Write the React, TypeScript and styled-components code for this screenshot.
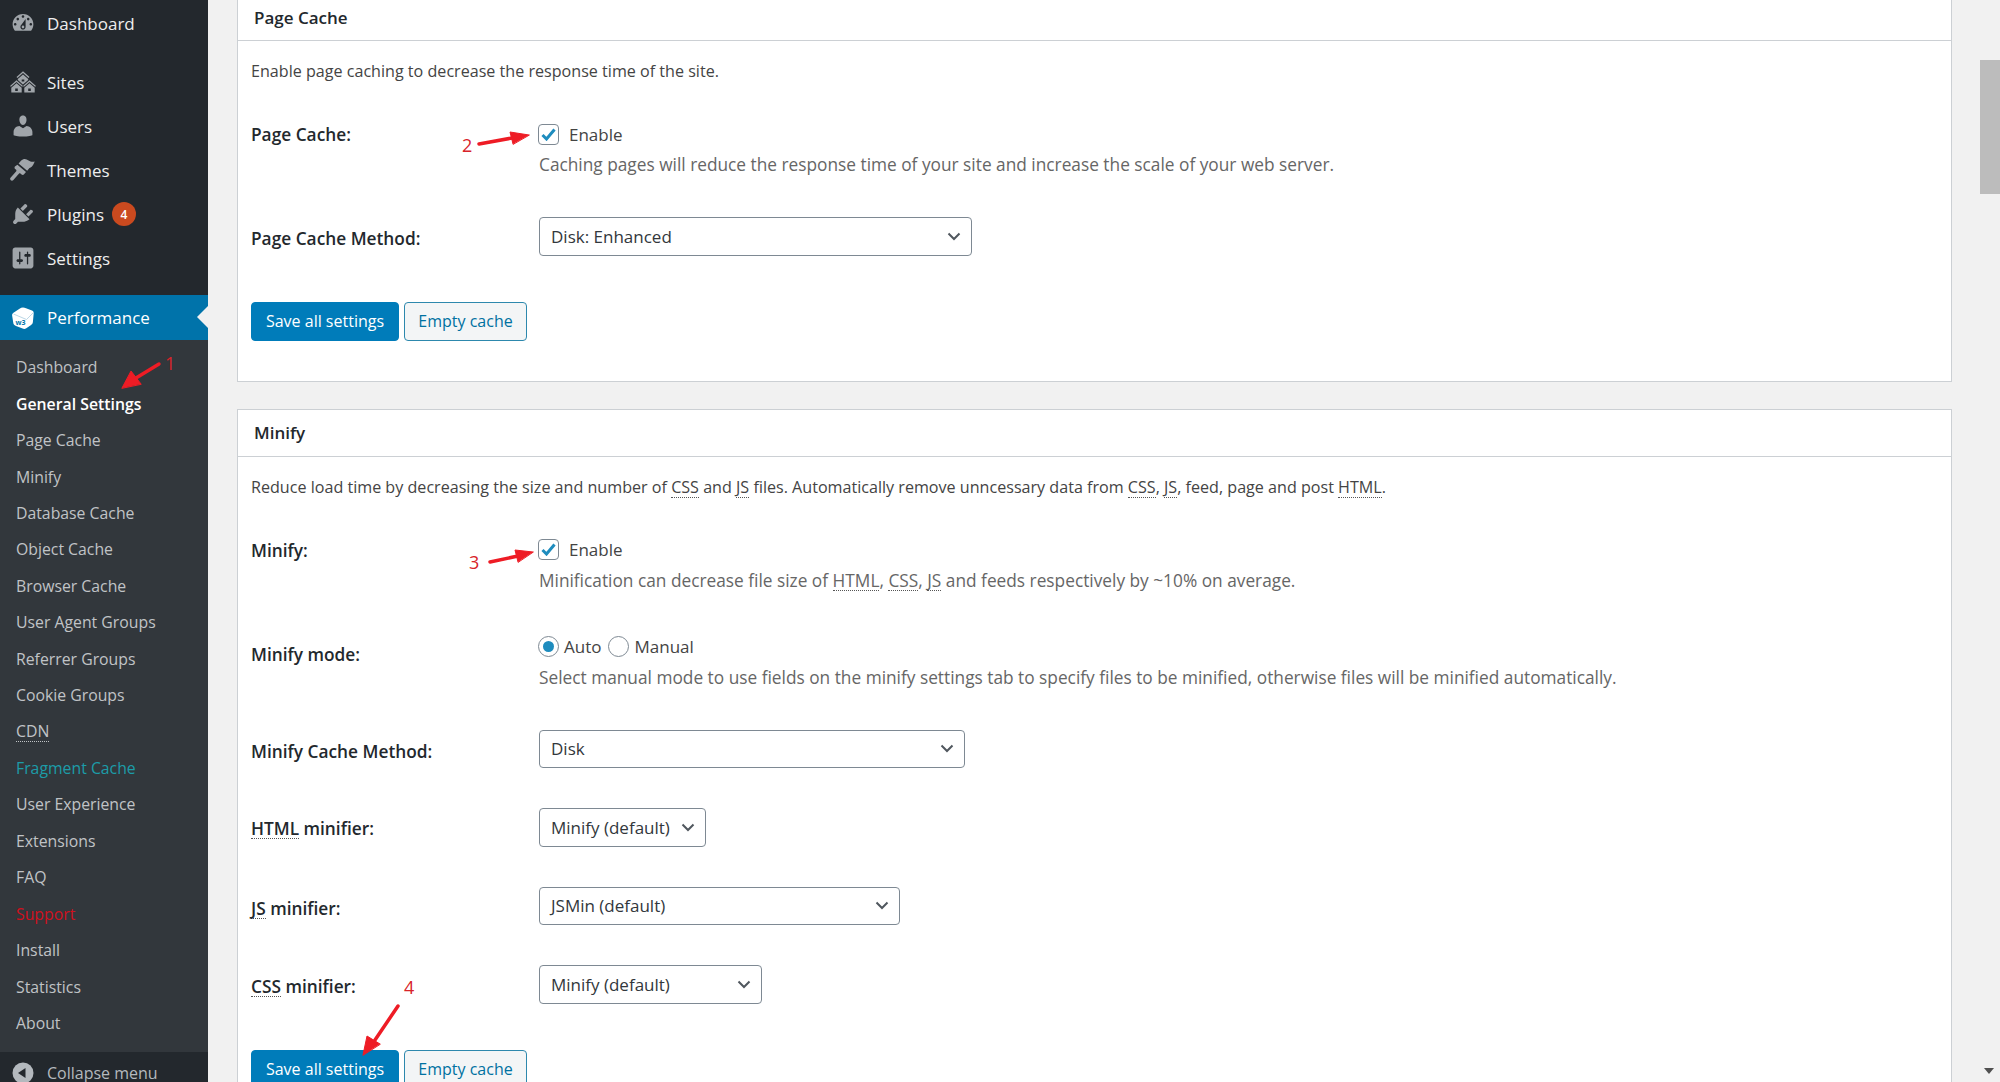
import styled, { createGlobalStyle } from 'styled-components';

const GlobalStyle = createGlobalStyle`
    html, body {
        margin: 0;
        padding: 0;
        height: 1082px;
        overflow: hidden;
        background: #f1f1f1;
        font-family: 'Open Sans', 'Noto Sans', sans-serif;
    }
`;

const icons = {
    dashboard:
        'M3.76 16h12.48c1.1-1.37 1.76-3.11 1.76-5 0-4.42-3.58-8-8-8s-8 3.58-8 8c0 1.89.66 3.63 1.76 5zM10 4c.55 0 1 .45 1 1s-.45 1-1 1-1-.45-1-1 .45-1 1-1zM6 6c.55 0 1 .45 1 1s-.45 1-1 1-1-.45-1-1 .45-1 1-1zm8 0c.55 0 1 .45 1 1s-.45 1-1 1-1-.45-1-1 .45-1 1-1zm-5.37 5.55L12 7v6c0 1.1-.9 2-2 2s-2-.9-2-2c0-.57.24-1.08.63-1.45zM4 10c.55 0 1 .45 1 1s-.45 1-1 1-1-.45-1-1 .45-1 1-1zm12 0c.55 0 1 .45 1 1s-.45 1-1 1-1-.45-1-1 .45-1 1-1zm-5 3c0-.55-.45-1-1-1s-1 .45-1 1 .45 1 1 1 1-.45 1-1z',
    sites: 'M14.27 6.87L10 3.14 5.73 6.87 5 6.14l5-4.38 5 4.38zM14 8.42l-4.05 3.43L6 8.38v-.74l4-3.5 4 3.5v.78zM11 9.7V8H9v1.7h2zm-1.73 4.03L5 10 .73 13.73 0 13l5-4.38L10 13zm10 0L15 10l-4.27 3.73L10 13l5-4.38L20 13zM5 11l4 3.5V18H1v-3.5zm10 0l4 3.5V18h-8v-3.5zM6 17v-2H4v2h2zm10 0v-2h-2v2h2z',
    users: 'M10 9.25c-2.27 0-2.73-3.44-2.73-3.44C7 4.02 7.82 2 9.97 2c2.16 0 2.98 2.02 2.71 3.81 0 0-.41 3.44-2.68 3.44zm0 2.57L12.72 10c2.39 0 4.52 2.33 4.52 4.53v2.49s-3.65 1.13-7.24 1.13c-3.65 0-7.24-1.13-7.24-1.13v-2.49c0-2.25 1.94-4.48 4.47-4.48z',
    themes: 'M19 3.5c-2 .6-3.4 0-4.7-.8-1.2-.7-2-1.4-3.4-1.2-.9.1-1.8.7-2.6 1.6L6.6 5l6.6 5.6 1.3-1.6c.5-.7 1.5-.9 2.2-1.5.9-.9 1.7-2.4 2.3-4zM5.7 6l6.6 5.6-1.5 1.7c-.5.6-1.3.6-1.9.1l-.9-.8c-.3-.2-.8-.2-1 .1l-4.4 5c-.5.6-1.4.7-2 .2-.6-.5-.7-1.4-.2-2l4.4-5c.2-.3.2-.8-.1-1l-.7-.6c-.6-.5-.7-1.4-.2-2z',
    plugins:
        'M13.11 4.36L9.87 7.6 8 5.73l3.24-3.24c.35-.34 1.05-.2 1.56.32.52.51.66 1.21.31 1.55zm-8 1.77l.91-1.12 9.01 9.01-1.19.84c-.71.71-2.63 1.16-3.82 1.16H6.14L4.9 17.26c-.59.59-1.54.59-2.12 0-.59-.58-.59-1.53 0-2.12l1.24-1.24v-3.88c0-1.13.4-3.19 1.09-3.89zm7.26 3.97l3.24-3.24c.34-.35 1.04-.21 1.55.31.52.51.66 1.21.31 1.55l-3.24 3.25z',
    settings:
        'M18 16V4c0-1.1-.9-2-2-2H4c-1.1 0-2 .9-2 2v12c0 1.1.9 2 2 2h12c1.1 0 2-.9 2-2zM8 11h1c.55 0 1 .45 1 1s-.45 1-1 1H8v1.5c0 .28-.22.5-.5.5s-.5-.22-.5-.5V13H6c-.55 0-1-.45-1-1s.45-1 1-1h1V5.5c0-.28.22-.5.5-.5s.5.22.5.5V11zm5-2h-1c-.55 0-1-.45-1-1s.45-1 1-1h1V5.5c0-.28.22-.5.5-.5s.5.22.5.5V7h1c.55 0 1 .45 1 1s-.45 1-1 1h-1v5.5c0 .28-.22.5-.5.5s-.5-.22-.5-.5V9z',
};

const MenuIcon = ({ d }: { d: string }) => (
    <IconSvg viewBox="0 0 20 20">
        <path d={d} fillRule="evenodd" />
    </IconSvg>
);

const CubeIcon = () => (
    <IconSvg viewBox="0 0 26 26">
        <path
            d="M13 2.5c1 0 2 .3 3 .7l6 2.4c1.2.5 1.8 1.5 1.7 2.8l-.8 8.6c-.1 1.2-.7 2.2-1.8 3l-4.8 3.2c-1.2.8-2.4.9-3.7.4l-6.6-2.7c-1.2-.5-2.3-1.2-2.6-2.5L2.2 11c-.2-1.2 0-2.2.9-3l6.4-4.3c1.1-.8 2.3-1.2 3.5-1.2z"
            fill="#fff"
        />
        <path d="M3.5 9l13 5.5L23 8" fill="none" stroke="#bcd7e6" strokeWidth="1" />
        <text x="5.5" y="19.5" fontSize="7" fontWeight="700" fill="#0073aa" fontFamily="Open Sans, sans-serif">
            w3
        </text>
    </IconSvg>
);

const CollapseIcon = () => (
    <IconSvg viewBox="0 0 26 26">
        <circle cx="13" cy="13" r="10.5" fill="#b4b9be" />
        <path d="M15.5 8v10L8 13z" fill="#23282d" />
    </IconSvg>
);

const Chevron = () => (
    <ChevronSvg viewBox="0 0 14 9">
        <path d="M1.5 1.5L7 7l5.5-5.5" fill="none" stroke="#50575e" strokeWidth="2" />
    </ChevronSvg>
);

const Check = () => (
    <svg width="15" height="13" viewBox="0 0 15 13">
        <path d="M1.5 7l4 4L13.5 1.5" fill="none" stroke="#1e8cbe" strokeWidth="3" />
    </svg>
);

type Tone = 'active' | 'teal' | 'red';

const subItems: { label: string; tone?: Tone; abbr?: boolean }[] = [
    { label: 'Dashboard' },
    { label: 'General Settings', tone: 'active' },
    { label: 'Page Cache' },
    { label: 'Minify' },
    { label: 'Database Cache' },
    { label: 'Object Cache' },
    { label: 'Browser Cache' },
    { label: 'User Agent Groups' },
    { label: 'Referrer Groups' },
    { label: 'Cookie Groups' },
    { label: 'CDN', abbr: true },
    { label: 'Fragment Cache', tone: 'teal' },
    { label: 'User Experience' },
    { label: 'Extensions' },
    { label: 'FAQ' },
    { label: 'Support', tone: 'red' },
    { label: 'Install' },
    { label: 'Statistics' },
    { label: 'About' },
];

const Sidebar = () => (
    <Side>
        <MenuGroup>
            <MenuItem>
                <MenuIcon d={icons.dashboard} />
                Dashboard
            </MenuItem>
        </MenuGroup>
        <MenuGroup>
            <MenuItem>
                <MenuIcon d={icons.sites} />
                Sites
            </MenuItem>
            <MenuItem>
                <MenuIcon d={icons.users} />
                Users
            </MenuItem>
            <MenuItem>
                <MenuIcon d={icons.themes} />
                Themes
            </MenuItem>
            <MenuItem>
                <MenuIcon d={icons.plugins} />
                Plugins
                <Count>4</Count>
            </MenuItem>
            <MenuItem>
                <MenuIcon d={icons.settings} />
                Settings
            </MenuItem>
        </MenuGroup>
        <CurrentItem>
            <CubeIcon />
            Performance
        </CurrentItem>
        <SubMenu>
            {subItems.map(({ label, tone, abbr }, index) => (
                <SubItem key={index} $tone={tone}>
                    {abbr ? <MenuAbbr>{label}</MenuAbbr> : label}
                </SubItem>
            ))}
        </SubMenu>
        <CollapseItem>
            <CollapseIcon />
            Collapse menu
        </CollapseItem>
    </Side>
);

const SelectBox = ({ width, value }: { width: number; value: string }) => (
    <Select $width={width}>
        {value}
        <Chevron />
    </Select>
);

const Actions = ({ gap }: { gap: number }) => (
    <ButtonRow $gap={gap}>
        <PrimaryButton>Save all settings</PrimaryButton>
        <SecondaryButton>Empty cache</SecondaryButton>
    </ButtonRow>
);

const Annotations = () => (
    <>
        <ArrowLayer viewBox="0 0 2000 1082">
            <g fill="#ee1c25" stroke="#ee1c25" strokeLinecap="round">
                <path d="M159 364L136 378" strokeWidth="3.5" fill="none" />
                <path d="M122 388L131 371L141 384z" />
                <path d="M479 144L512 138" strokeWidth="3.5" fill="none" />
                <path d="M529 135L510 132L513 144z" />
                <path d="M490 562L518 556" strokeWidth="3.5" fill="none" />
                <path d="M533 552L515 550L518 562z" />
                <path d="M398 1006L375 1040" strokeWidth="3.5" fill="none" />
                <path d="M363 1055L367 1036L380 1044z" />
            </g>
        </ArrowLayer>
        <Mark $x={165} $y={350}>1</Mark>
        <Mark $x={462} $y={132}>2</Mark>
        <Mark $x={469} $y={549}>3</Mark>
        <Mark $x={404} $y={974}>4</Mark>
    </>
);

export default function App() {
    return (
        <Shell>
            <GlobalStyle />
            <Sidebar />
            <Main>
                <Card $gap={27}>
                    <CardHeader>Page Cache</CardHeader>
                    <CardBody>
                        <Intro>Enable page caching to decrease the response time of the site.</Intro>
                        <Row>
                            <Label>Page Cache:</Label>
                            <Control>
                                <CheckLine>
                                    <CheckBox>
                                        <Check />
                                    </CheckBox>
                                    Enable
                                </CheckLine>
                                <Help>
                                    Caching pages will reduce the response time of your site and increase the scale of
                                    your web server.
                                </Help>
                            </Control>
                        </Row>
                        <Row>
                            <Label $pad={9}>Page Cache Method:</Label>
                            <Control>
                                <SelectBox width={433} value="Disk: Enhanced" />
                            </Control>
                        </Row>
                        <Actions gap={26} />
                    </CardBody>
                </Card>
                <Card>
                    <CardHeader>Minify</CardHeader>
                    <CardBody>
                        <Intro>
                            Reduce load time by decreasing the size and number of <Abbr>CSS</Abbr> and <Abbr>JS</Abbr>{' '}
                            files. Automatically remove unncessary data from <Abbr>CSS</Abbr>, <Abbr>JS</Abbr>, feed,
                            page and post <Abbr>HTML</Abbr>.
                        </Intro>
                        <Row>
                            <Label>Minify:</Label>
                            <Control>
                                <CheckLine>
                                    <CheckBox>
                                        <Check />
                                    </CheckBox>
                                    Enable
                                </CheckLine>
                                <Help>
                                    Minification can decrease file size of <Abbr>HTML</Abbr>, <Abbr>CSS</Abbr>,{' '}
                                    <Abbr>JS</Abbr> and feeds respectively by ~10% on average.
                                </Help>
                            </Control>
                        </Row>
                        <Row>
                            <Label $pad={9}>Minify mode:</Label>
                            <Control>
                                <RadioLine>
                                    <Radio $on />
                                    <RadioText>Auto</RadioText>
                                    <Radio />
                                    <RadioText>Manual</RadioText>
                                </RadioLine>
                                <Help>
                                    Select manual mode to use fields on the minify settings tab to specify files to be
                                    minified, otherwise files will be minified automatically.
                                </Help>
                            </Control>
                        </Row>
                        <Row>
                            <Label $pad={9}>Minify Cache Method:</Label>
                            <Control>
                                <SelectBox width={426} value="Disk" />
                            </Control>
                        </Row>
                        <Row>
                            <Label $pad={8}>
                                <Abbr>HTML</Abbr> minifier:
                            </Label>
                            <Control>
                                <SelectBox width={167} value="Minify (default)" />
                            </Control>
                        </Row>
                        <Row>
                            <Label $pad={9}>
                                <Abbr>JS</Abbr> minifier:
                            </Label>
                            <Control>
                                <SelectBox width={361} value="JSMin (default)" />
                            </Control>
                        </Row>
                        <Row>
                            <Label $pad={9}>
                                <Abbr>CSS</Abbr> minifier:
                            </Label>
                            <Control>
                                <SelectBox width={223} value="Minify (default)" />
                            </Control>
                        </Row>
                        <Actions gap={26} />
                    </CardBody>
                </Card>
            </Main>
            <ScrollTrack>
                <ScrollThumb />
                <ScrollArrow />
            </ScrollTrack>
            <Annotations />
        </Shell>
    );
}

const Shell = styled.div`
    position: relative;
    display: flex;
    width: 2000px;
    height: 1082px;
    overflow: hidden;
    background: #f1f1f1;
    font-size: 17px;
    color: #444;
`;

const Side = styled.nav`
    flex: 0 0 208px;
    display: flex;
    flex-direction: column;
    background: #23282d;
    color: #eee;
    padding-top: 1px;
`;

const MenuGroup = styled.div`
    flex: none;
    margin-bottom: 15px;
`;

const MenuItem = styled.div`
    flex: none;
    display: flex;
    align-items: center;
    height: 44px;
    padding-left: 10px;
    color: #eee;
`;

const CurrentItem = styled(MenuItem)`
    position: relative;
    height: 45px;
    background: #0073aa;
    color: #fff;
    &::after {
        content: '';
        position: absolute;
        right: 0;
        top: 11px;
        border: 11px solid transparent;
        border-left: 0;
        border-right-color: #f1f1f1;
    }
`;

const IconSvg = styled.svg`
    flex: 0 0 26px;
    width: 26px;
    height: 26px;
    margin-right: 11px;
    fill: #a0a5aa;
`;

const Count = styled.span`
    display: inline-flex;
    align-items: center;
    justify-content: center;
    width: 24px;
    height: 24px;
    margin-left: 8px;
    border-radius: 50%;
    background: #ca4a1f;
    color: #fff;
    font-size: 12px;
    font-weight: 600;
`;

const SubMenu = styled.div`
    flex: none;
    background: #32373c;
    padding: 9px 0 11px;
`;

const toneColor = { active: '#fff', teal: '#1c9ca8', red: '#d0101e' };

const SubItem = styled.div<{ $tone?: Tone }>`
    display: flex;
    align-items: center;
    height: 36.44px;
    padding-left: 16px;
    font-size: 15.8px;
    color: ${({ $tone }) => ($tone ? toneColor[$tone] : '#c0c3c6')};
    font-weight: ${({ $tone }) => ($tone === 'active' ? 600 : 400)};
`;

const MenuAbbr = styled.span`
    border-bottom: 1px dotted #c0c3c6;
    line-height: 19px;
`;

const CollapseItem = styled(MenuItem)`
    height: 30px;
    padding-top: 6px;
    font-size: 16px;
    line-height: 18px;
    color: #b4b9be;
`;

const Main = styled.main`
    flex: 1;
    margin-top: -7px;
    padding: 0 48px 0 29px;
    min-width: 0;
`;

const Card = styled.section<{ $gap?: number }>`
    background: #fff;
    border: 1px solid #ccd0d4;
    margin-bottom: ${({ $gap }) => $gap ?? 0}px;
`;

const CardHeader = styled.h2`
    display: flex;
    align-items: center;
    height: 46px;
    margin: 0;
    padding-left: 16px;
    border-bottom: 1px solid #ccd0d4;
    font-size: 17px;
    font-weight: 600;
    color: #23282d;
`;

const CardBody = styled.div`
    padding: 17px 13px 40px;
`;

const Intro = styled.p`
    margin: 0 0 18px;
    line-height: 26px;
    font-size: 16.13px;
    color: #444;
`;

const Row = styled.div`
    display: grid;
    grid-template-columns: 288px 1fr;
    padding: 20px 0;
`;

const Label = styled.div<{ $pad?: number }>`
    padding-top: ${({ $pad }) => $pad ?? 0}px;
    line-height: 26px;
    font-size: 17.3px;
    font-weight: 600;
    color: #23282d;
`;

const Control = styled.div`
    min-width: 0;
`;

const CheckLine = styled.div`
    display: flex;
    align-items: center;
    gap: 10px;
    height: 26px;
    margin: -1px 0 0 -1px;
    color: #444;
`;

const CheckBox = styled.span`
    display: flex;
    align-items: center;
    justify-content: center;
    box-sizing: border-box;
    width: 21px;
    height: 21px;
    border: 1px solid #7e8993;
    border-radius: 4px;
    background: #fff;
`;

const RadioLine = styled.div`
    display: flex;
    align-items: center;
    height: 26px;
    margin: 1px 0 0 -1px;
`;

const Radio = styled.span<{ $on?: boolean }>`
    display: flex;
    align-items: center;
    justify-content: center;
    box-sizing: border-box;
    width: 21px;
    height: 21px;
    border: 1px solid #7e8993;
    border-radius: 50%;
    background: #fff;
    &::before {
        content: '';
        display: ${({ $on }) => ($on ? 'block' : 'none')};
        width: 11px;
        height: 11px;
        border-radius: 50%;
        background: #1e8cbe;
    }
`;

const RadioText = styled.span`
    margin: 0 7px 0 5px;
`;

const Help = styled.div`
    margin-top: 5px;
    line-height: 25px;
    font-size: 17.3px;
    color: #666;
    white-space: nowrap;
`;

const Abbr = styled.span`
    border-bottom: 1px dotted #555;
    line-height: 19px;
    display: inline-block;
`;

const Select = styled.div<{ $width: number }>`
    display: flex;
    align-items: center;
    justify-content: space-between;
    box-sizing: border-box;
    width: ${({ $width }) => $width}px;
    height: 38.5px;
    padding: 0 10px 0 11px;
    border: 1px solid #7e8993;
    border-radius: 4px;
    background: #fff;
    color: #32373c;
    white-space: nowrap;
`;

const ChevronSvg = styled.svg`
    flex: none;
    width: 14px;
    height: 9px;
`;

const ButtonRow = styled.div<{ $gap: number }>`
    display: flex;
    gap: 5px;
    padding-top: ${({ $gap }) => $gap}px;
`;

const PrimaryButton = styled.button`
    width: 148px;
    height: 39px;
    padding: 0;
    border: 1px solid #007cba;
    border-radius: 4px;
    background: #007cba;
    color: #fff;
    font-family: inherit;
    font-size: 16px;
`;

const SecondaryButton = styled(PrimaryButton)`
    width: 123px;
    border-color: #2d88ad;
    background: #f3f5f6;
    color: #0071a1;
`;

const ScrollTrack = styled.div`
    position: absolute;
    top: 0;
    right: 0;
    bottom: 0;
    width: 20px;
`;

const ScrollThumb = styled.div`
    position: absolute;
    top: 60px;
    left: 0;
    width: 20px;
    height: 134px;
    background: #bcbcbc;
`;

const ScrollArrow = styled.div`
    position: absolute;
    top: 1068px;
    left: 4px;
    border: 5.5px solid transparent;
    border-top: 6px solid #505050;
    border-bottom: 0;
`;

const ArrowLayer = styled.svg`
    position: absolute;
    top: 0;
    left: 0;
    width: 2000px;
    height: 1082px;
    pointer-events: none;
`;

const Mark = styled.span<{ $x: number; $y: number }>`
    position: absolute;
    left: ${({ $x }) => $x}px;
    top: ${({ $y }) => $y}px;
    color: #d8232a;
    font-size: 18px;
    line-height: 26px;
`;
